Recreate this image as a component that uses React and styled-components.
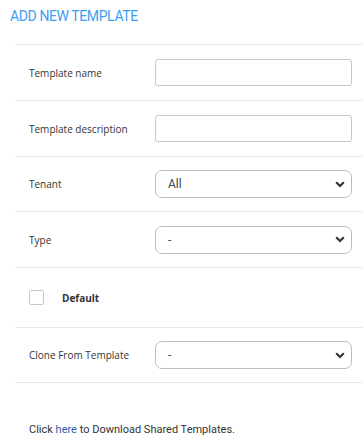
import React from "react"
import styled, { createGlobalStyle } from 'styled-components';

const GlobalStyle = createGlobalStyle`
  body {
    margin: 0;
    background: #fff;
    font-family: Roboto, "Liberation Sans", sans-serif;
  }
`;

const Chevron = () => (
  <svg width="10" height="7" viewBox="0 0 10 7">
    <path d="M1.2 1.3 L5 5 L8.8 1.3" fill="none" stroke="#333" strokeWidth="2.2" />
  </svg>
);

const Field = ({ label, short, children }) => (
  <Row $short={short}>
    <Label>{label}</Label>
    {children}
  </Row>
);

const Dropdown = ({ value }) => (
  <SelectBox>
    <span>{value}</span>
    <Chevron />
  </SelectBox>
);

const App = () => (
  <Page>
    <GlobalStyle />
    <Title>ADD NEW TEMPLATE</Title>
    <Form>
      <Field label="Template name">
        <TextInput />
      </Field>
      <Field label="Template description">
        <TextInput />
      </Field>
      <Field label="Tenant" short>
        <Dropdown value="All" />
      </Field>
      <Field label="Type">
        <Dropdown value="-" />
      </Field>
      <CheckRow>
        <Checkbox />
        <CheckLabel>Default</CheckLabel>
      </CheckRow>
      <Field label="Clone From Template" short>
        <Dropdown value="-" />
      </Field>
    </Form>
    <Footer>
      Click <a href="#">here</a> to Download Shared Templates.
    </Footer>
  </Page>
)

const Page = styled.div`
  width: 363px;
  height: 447px;
  overflow: hidden;
`;

const Title = styled.h1`
  margin: 0;
  padding: 8px 0 0 10px;
  height: 44px;
  box-sizing: border-box;
  font-size: 14px;
  font-weight: 400;
  color: #3d9df2;
  letter-spacing: -0.4px;
`;

const Form = styled.div`
  margin-left: 15px;
  border-top: 1px solid #e8e8e8;
`;

const Row = styled.div`
  display: flex;
  align-items: center;
  height: ${p => (p.$short ? 54 : 55)}px;
  padding: 0 11px 0 14px;
  border-bottom: 1px solid #e8e8e8;
`;

const Label = styled.div`
  width: 126px;
  font-family: "Open Sans", sans-serif;
  font-size: 10px;
  color: #333;
`;

const TextInput = styled.div`
  flex: 1;
  height: 27px;
  box-sizing: border-box;
  border: 1px solid #c8c8cc;
  border-radius: 3px;
`;

const SelectBox = styled.div`
  flex: 1;
  height: 28px;
  box-sizing: border-box;
  border: 1px solid #bdbdbd;
  border-radius: 7px;
  display: flex;
  align-items: center;
  justify-content: space-between;
  padding: 0 6px 0 12px;
  font-size: 12px;
  color: #444;
`;

const CheckRow = styled(Row)`
  height: 59px;
`;

const Checkbox = styled.div`
  width: 13px;
  height: 13px;
  border: 1px solid #c8c8c8;
  border-radius: 2px;
  margin-right: 18px;
`;

const CheckLabel = styled.div`
  font-family: "Open Sans", sans-serif;
  font-size: 10px;
  font-weight: 700;
  color: #333;
`;

const Footer = styled.div`
  padding: 40px 0 0 29px;
  font-size: 11px;
  color: #333;
  a {
    color: #2c5ea8;
    text-decoration: none;
  }
`;

export default App
